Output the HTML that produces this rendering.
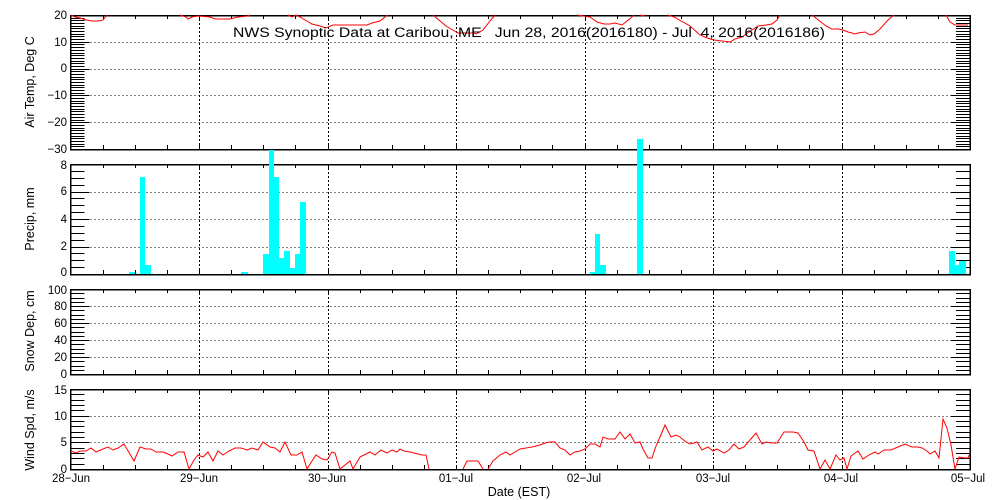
<!DOCTYPE html>
<html><head><meta charset="utf-8"><style>
html,body{margin:0;padding:0;background:#fff;width:1000px;height:500px;overflow:hidden}
svg text{font-family:"Liberation Sans",sans-serif;font-size:11.5px;fill:#000}
</style></head><body>
<svg id="s" width="1000" height="500" xmlns="http://www.w3.org/2000/svg" shape-rendering="crispEdges">
<g id="g"></g>
<g fill="#00ffff">
<rect x="129" y="272" width="6" height="2"/>
<rect x="140" y="177" width="5" height="97"/>
<rect x="145" y="265" width="6" height="9"/>
<rect x="241" y="272" width="7" height="2"/>
<rect x="263" y="254" width="6" height="20"/>
<rect x="269" y="150" width="5" height="124"/>
<rect x="274" y="177" width="5" height="97"/>
<rect x="279" y="258" width="5" height="16"/>
<rect x="284" y="251" width="6" height="23"/>
<rect x="290" y="268" width="5" height="6"/>
<rect x="295" y="254" width="5" height="20"/>
<rect x="300" y="202" width="6" height="72"/>
<rect x="590" y="272" width="5" height="2"/>
<rect x="595" y="234" width="5" height="40"/>
<rect x="600" y="265" width="6" height="9"/>
<rect x="637" y="139" width="6" height="135"/>
<rect x="949" y="251" width="6" height="23"/>
<rect x="955" y="265" width="4" height="9"/>
<rect x="959" y="261" width="7" height="13"/>
</g>
<g fill="none" stroke="#ff0000" stroke-width="1" shape-rendering="auto">
<polyline points="71,15 75,17 80,18 86,20 92,21 98,21 103,20 107,15"/>
<polyline points="180,15 186,17 188,19 192,17 198,16 210,17 215,19 230,19 238,17 248,16 250,15"/>
<polyline points="288,15 292,17 296,15 300,17 305,20 312,24 320,26 326,28 333,25 367,25 372,23 380,21 385,17 388,15"/>
<polyline points="433,15 446,26 458,33 473,33 476,34 483,30 490,21 495,15"/>
<polyline points="577,15 590,17 597,22 604,24 610,24 615,23 622,25 627,21 632,17 634,15"/>
<polyline points="640,15 643,16 645,15"/>
<polyline points="668,15 674,17 690,26 700,35 707,38 714,40 730,42 735,39 742,37 749,32 758,26 766,25 772,24 777,20 780,15"/>
<polyline points="812,15 826,26 832,29 838,29 843,30 848,32 852,33 855,34 858,33 865,32 870,35 874,34 880,29 888,20 894,15"/>
<polyline points="946,15 950,22 955,25 962,25 968,25"/>
<polyline points="71,451 76,453 80,451 86,451 91,448 96,452 103,449 108,447 113,450 118,448 124,444 134,461 140,447 146,449 151,449 156,452 163,452 168,454 172,456 178,452 184,452 189,469 194,460 198,455 203,457 208,452 213,461 218,451 223,455 229,451 235,448 241,448 247,450 252,448 258,450 263,442 270,447 275,448 280,452 285,442 291,455 297,455 302,452 307,469 312,461 316,455 322,459 327,460 332,452 335,453 340,469 350,461 353,469 360,457 366,454 370,452 375,455 381,450 387,453 392,450 397,452 400,449 404,451 410,452 422,455 426,455 429,469"/>
<polyline points="463,469 467,461 478,461 483,469"/>
<polyline points="488,469 493,461 500,455 506,452 510,455 515,452 520,449 526,448 532,447 540,445 545,443 550,442 555,442 560,448 565,450 570,455 575,452 580,451 585,449 590,444 595,444 600,447 603,437 608,439 615,439 620,432 625,439 630,434 635,443 640,442 643,449 648,458 652,458 656,446 660,437 665,425 671,437 676,435 680,437 686,442 690,444 694,443 697,442 702,450 708,447 713,451 717,449 724,453 729,450 734,444 739,449 744,447 750,440 756,433 762,444 766,442 772,443 777,443 784,432 793,432 798,433 804,442 808,450 814,451 820,469 825,460 830,469 836,455 840,460 844,458 847,469 851,456 858,451 863,459 869,455 875,452 878,454 884,450 891,450 898,447 905,444 912,447 918,447 922,448 927,451 930,454 935,451 939,458 943,419 947,428 951,445 955,469 959,457 965,458 968,458 970,453"/>
</g>
<text x="233" y="37" textLength="592" lengthAdjust="spacingAndGlyphs" xml:space="preserve" style="font-size:13.5px;white-space:pre">NWS Synoptic Data at Caribou, ME   Jun 28, 2016(2016180) - Jul  4, 2016(2016186)</text>
<g text-anchor="end">
<text x="67" y="19">20</text><text x="67" y="46">10</text><text x="67" y="72">0</text><text x="67" y="99">−10</text><text x="67" y="126">−20</text><text x="67" y="153">−30</text>
<text x="67" y="169">8</text><text x="67" y="195">6</text><text x="67" y="223">4</text><text x="67" y="250">2</text><text x="67" y="276">0</text>
<text x="67" y="294">100</text><text x="67" y="310">80</text><text x="67" y="327">60</text><text x="67" y="344">40</text><text x="67" y="361">20</text><text x="67" y="378">0</text>
<text x="67" y="394">15</text><text x="67" y="420">10</text><text x="67" y="446">5</text><text x="67" y="473">0</text>
</g>
<g text-anchor="middle">
<text x="71" y="482">28−Jun</text><text x="199" y="482">29−Jun</text><text x="327" y="482">30−Jun</text><text x="456" y="482">01−Jul</text><text x="584" y="482">02−Jul</text><text x="713" y="482">03−Jul</text><text x="841" y="482">04−Jul</text><text x="968" y="482">05−Jul</text>
<text x="519" y="496" style="font-size:12.5px">Date (EST)</text>
<text transform="translate(34,82) rotate(-90)" style="font-size:12.5px">Air Temp, Deg C</text>
<text transform="translate(34,219) rotate(-90)" style="font-size:12.5px">Precip, mm</text>
<text transform="translate(34,331) rotate(-90)" style="font-size:12.5px">Snow Dep, cm</text>
<text transform="translate(34,430) rotate(-90)" style="font-size:12.5px">Wind Spd, m/s</text>
</g>
</svg>
<script>
var g=document.getElementById('g'),h='';
var L=70.5,R=970;
function ln(x1,y1,x2,y2,extra){h+='<line x1="'+x1+'" y1="'+y1+'" x2="'+x2+'" y2="'+y2+'" stroke="#000" '+(extra||'')+'/>';}
var panels=[
 {t:15,b:149,min:-30,max:20,maj:10,mn:1},
 {t:164,b:274,min:0,max:8,maj:2,mn:0.5},
 {t:289,b:374,min:0,max:100,maj:20,mn:5},
 {t:389,b:469,min:0,max:15,maj:5,mn:1}];
var dw=(R-L)/7;
panels.forEach(function(p){
 function Y(v){return Math.round(p.b-(v-p.min)/(p.max-p.min)*(p.b-p.t))+0.5;}
 for(var d=1;d<7;d++){var x=Math.round(L+d*dw)+0.5;ln(x,p.t,x,p.b,'stroke-dasharray="2,2"');}
 for(var v=p.min+p.maj;v<p.max;v+=p.maj){var y=Y(v);ln(L,y,R,y,'stroke-dasharray="1,3"');}
 for(var q=1;q<28;q++){var x=Math.round(L+q*dw/4)+0.5;ln(x,p.t,x,p.t+4);ln(x,p.b,x,p.b-4);}
 var n=Math.round((p.max-p.min)/p.mn);
 for(var i=0;i<=n;i++){var v=p.min+i*p.mn,y=Y(v);var mj=Math.abs(v/p.maj-Math.round(v/p.maj))<1e-6;var len=mj?19:14;ln(L,y,L+len,y);ln(R,y,R-len,y);}
 h+='<rect x="'+L+'" y="'+(p.t+0.5)+'" width="'+(R-L)+'" height="'+(p.b-p.t)+'" fill="none" stroke="#000" stroke-width="1.5"/>';
});
g.innerHTML=h;
</script>
</body></html>
